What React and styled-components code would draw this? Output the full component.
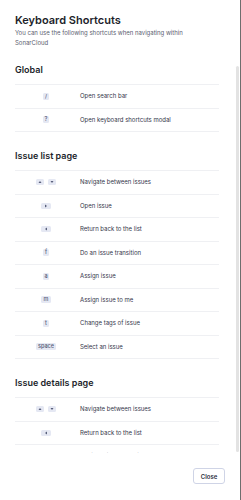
import React from "react";
import styled, { createGlobalStyle } from "styled-components";

const Global = createGlobalStyle`
  html, body { margin: 0; padding: 0; background: #ffffff; }
  body { font-family: Inter, "Noto Sans", sans-serif; -webkit-font-smoothing: antialiased; }
  * { box-sizing: border-box; }
`;

const Modal = styled.div`
  position: relative;
  width: 241px;
  height: 500px;
  background: #fff;
  border-right: 1px solid #6e6e6e;
  display: flex;
  flex-direction: column;
`;

const ScrollArea = styled.div`
  height: 453px;
  overflow: hidden;
  padding: 13px 21px 0 15px;
`;

const Thumb = styled.div`
  position: absolute;
  right: 1px;
  top: 66px;
  width: 3px;
  height: 386px;
  background: #e3e3e3;
  border-radius: 2px;
`;

const Title = styled.h1`
  margin: 0;
  font-size: 11px;
  line-height: 14px;
  font-weight: 600;
  color: #1d1f2b;
`;

const Subtitle = styled.p`
  margin: 0.5px 0 16.5px;
  font-size: 6px;
  line-height: 10px;
  color: #5c6070;
  width: 180px;
`;

const Section = styled.section`
  & + & { margin-top: 18px; }
`;

const Heading = styled.h2`
  margin: 0 0 8px;
  font-size: 9px;
  line-height: 12px;
  font-weight: 600;
  color: #1d1f2b;
`;

const Table = styled.div`
  border-top: 1px solid #eff0f3;
`;

const Row = styled.div`
  display: grid;
  grid-template-columns: 62px 1fr;
  column-gap: 3px;
  align-items: center;
  height: 23.5px;
  border-bottom: 1px solid #eff0f3;
`;

const Keys = styled.div`
  display: flex;
  justify-content: center;
  align-items: center;
  gap: ${(p) => p.$gap ?? 3}px;
`;

const Key = styled.span`
  display: inline-flex;
  align-items: center;
  justify-content: center;
  min-width: ${(p) => p.$w ?? 6}px;
  height: ${(p) => p.$h ?? 7}px;
  padding: 0 ${(p) => p.$pad ?? 1}px;
  border-radius: 1.5px;
  background: #e5e8f3;
  color: #565c78;
  font-size: 5.5px;
  line-height: 7px;
  font-weight: 500;
`;

const Plus = styled.span`
  font-size: 5px;
  color: #565c78;
`;

const Desc = styled.span`
  font-size: 6px;
  line-height: 8px;
  color: #33364a;
  white-space: nowrap;
`;

const Footer = styled.div`
  height: 47px;
  padding: 15px 15px 0;
  display: flex;
  justify-content: flex-end;
  align-items: flex-start;
`;

const CloseButton = styled.button`
  width: 32px;
  height: 16px;
  border: 1px solid #cfd4e6;
  border-radius: 3px;
  background: #fff;
  font-family: Inter, "Noto Sans", sans-serif;
  font-size: 6px;
  font-weight: 600;
  color: #2b2e3c;
  padding: 0;
  cursor: pointer;
`;

const Tri = ({ dir }) => {
  const pts = {
    up: "0.5,3 2,1 3.5,3",
    down: "0.5,1 2,3 3.5,1",
    right: "1,0.5 3,2 1,3.5",
    left: "3,0.5 1,2 3,3.5",
  }[dir];
  return (
    <svg width="4" height="4" viewBox="0 0 4 4">
      <polygon points={pts} fill="#565c78" />
    </svg>
  );
};

const ArrowKey = ({ dir }) => (
  <Key $w={dir === "up" || dir === "down" ? 8 : 10} $h={6}>
    <Tri dir={dir} />
  </Key>
);

const renderKeys = (keys) => {
  if (keys === "updown")
    return (
      <Keys $gap={4}>
        <ArrowKey dir="up" />
        <ArrowKey dir="down" />
      </Keys>
    );
  if (keys === "right" || keys === "left")
    return (
      <Keys>
        <ArrowKey dir={keys} />
      </Keys>
    );
  if (keys === "alt-updown")
    return (
      <Keys $gap={2}>
        <Key $pad={1.5}>alt</Key>
        <Plus>+</Plus>
        <Key $w={10} $h={6}>
          <Tri dir="up" />
        </Key>
        <Key $w={10} $h={6}>
          <Tri dir="down" />
        </Key>
      </Keys>
    );
  return (
    <Keys>
      <Key $pad={keys.length > 1 ? 2.5 : keys === "m" ? 2.5 : 1}>{keys}</Key>
    </Keys>
  );
};

const sections = [
  {
    title: "Global",
    rows: [
      ["/", "Open search bar"],
      ["?", "Open keyboard shortcuts modal"],
    ],
  },
  {
    title: "Issue list page",
    rows: [
      ["updown", "Navigate between issues"],
      ["right", "Open issue"],
      ["left", "Return back to the list"],
      ["f", "Do an issue transition"],
      ["a", "Assign issue"],
      ["m", "Assign issue to me"],
      ["t", "Change tags of issue"],
      ["space", "Select an issue"],
    ],
  },
  {
    title: "Issue details page",
    rows: [
      ["updown", "Navigate between issues"],
      ["left", "Return back to the list"],
      ["alt-updown", "Navigate issue locations"],
      ["alt-updown", "Switch flows"],
    ],
  },
];

export default function App() {
  return (
    <>
      <Global />
      <Modal>
        <ScrollArea>
          <Title>Keyboard Shortcuts</Title>
          <Subtitle>
            You can use the following shortcuts when navigating within SonarCloud
          </Subtitle>
          {sections.map((s) => (
            <Section key={s.title}>
              <Heading>{s.title}</Heading>
              <Table>
                {s.rows.map(([k, d], i) => (
                  <Row key={i}>
                    {renderKeys(k)}
                    <Desc>{d}</Desc>
                  </Row>
                ))}
              </Table>
            </Section>
          ))}
        </ScrollArea>
        <Footer>
          <CloseButton>Close</CloseButton>
        </Footer>
        <Thumb />
      </Modal>
    </>
  );
}
